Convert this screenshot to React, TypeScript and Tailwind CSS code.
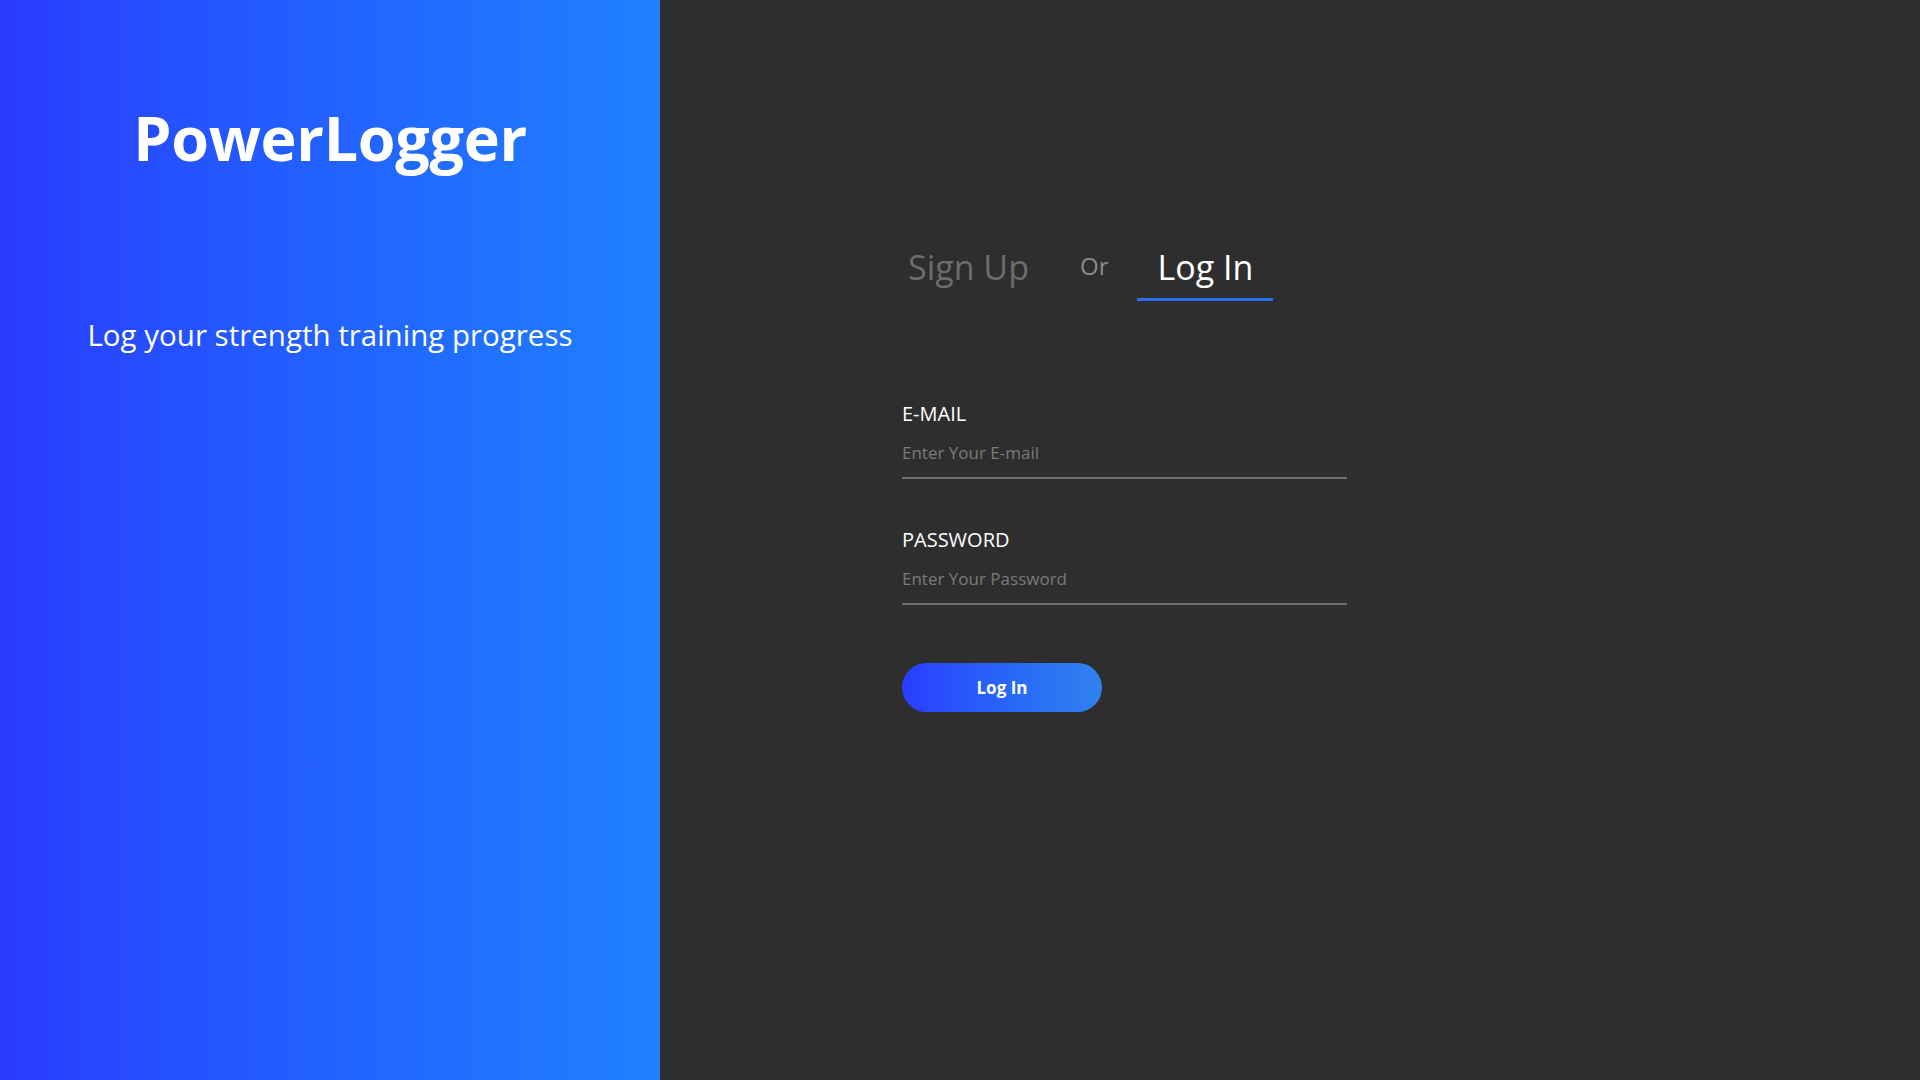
import { useState } from "react";

const font = { fontFamily: '"Open Sans", "Noto Sans", sans-serif' };

export default function App() {
  const [tab, setTab] = useState<"signup" | "login">("login");
  const [email, setEmail] = useState("");
  const [password, setPassword] = useState("");

  return (
    <div className="flex h-[1080px] w-full overflow-hidden bg-[#2e2e2e]" style={font}>
      <section className="flex h-full w-[660px] shrink-0 flex-col items-center bg-gradient-to-r from-[#2a3aff] to-[#2180ff] pt-[98px] text-white">
        <h1 className="text-[61px] font-bold leading-[80px] tracking-[-0.3px]">PowerLogger</h1>
        <p className="mt-[137px] text-[29.5px] leading-[40px]">Log your strength training progress</p>
      </section>

      <section className="flex-1 pl-[228px] pt-[242px]">
        <div className="flex items-end">
          <button
            onClick={() => setTab("signup")}
            className={`px-5 pb-[6px] text-[34px] leading-[50px] ${
              tab === "signup" ? "border-b-[3px] border-[#2a6ff0] text-white" : "border-b-[3px] border-transparent text-[#6c6c6c]"
            }`}
          >
            Sign Up
          </button>
          <span className="ml-[31px] mr-[29px] pb-[20px] text-[24px] leading-[30px] text-[#8a8a8a]">Or</span>
          <button
            onClick={() => setTab("login")}
            className={`px-5 pb-[6px] text-[34px] leading-[50px] ${
              tab === "login" ? "border-b-[3px] border-[#2a6ff0] text-white" : "border-b-[3px] border-transparent text-[#6c6c6c]"
            }`}
          >
            Log In
          </button>
        </div>

        <form className="ml-[14px] mt-[100px] w-[445px]" onSubmit={(e) => e.preventDefault()}>
          <label className="block text-[20px] leading-[26px] text-white" htmlFor="email">
            E-MAIL
          </label>
          <input
            id="email"
            type="email"
            value={email}
            onChange={(e) => setEmail(e.target.value)}
            placeholder="Enter Your E-mail"
            className="mt-[14px] block w-full border-b-2 border-[#6e6e6e] bg-transparent pb-[12px] text-[17px] leading-[24px] text-white placeholder-[#7a7a7a] outline-none"
          />

          <label className="mt-[48px] block text-[20px] leading-[26px] text-white" htmlFor="password">
            PASSWORD
          </label>
          <input
            id="password"
            type="password"
            value={password}
            onChange={(e) => setPassword(e.target.value)}
            placeholder="Enter Your Password"
            className="mt-[14px] block w-full border-b-2 border-[#6e6e6e] bg-transparent pb-[12px] text-[17px] leading-[24px] text-white placeholder-[#7a7a7a] outline-none"
          />

          <button
            type="submit"
            className="mt-[58px] h-[49px] w-[200px] rounded-full bg-gradient-to-r from-[#2a3cff] to-[#3182ee] text-[17px] font-bold text-white"
          >
            Log In
          </button>
        </form>
      </section>
    </div>
  );
}
